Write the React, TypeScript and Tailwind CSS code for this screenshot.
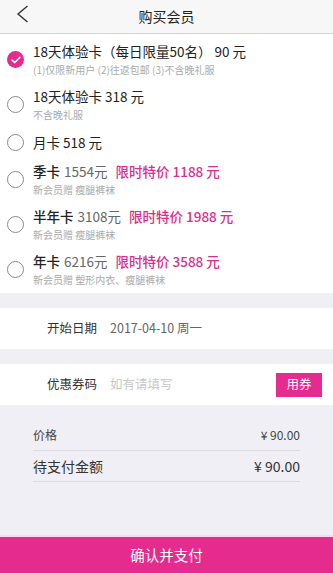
import type { ReactNode } from 'react';

const font = { fontFamily: '"Noto Sans CJK SC", "Noto Sans", sans-serif' };

interface Plan {
  title: ReactNode;
  sub?: string;
  checked?: boolean;
}

function Promo({ name, orig, price }: { name: string; orig: string; price: string }) {
  return (
    <>
      <span className="font-medium">{name}</span>
      <span className="ml-[4px] text-[#666]">{orig}</span>
      <span className="ml-[8px] font-medium text-[#d92f8b]">{price}</span>
    </>
  );
}

const plans: Plan[] = [
  {
    title: <span>18天体验卡（每日限量50名） 90 元</span>,
    sub: '(1)仅限新用户 (2)往返包邮 (3)不含晚礼服',
    checked: true,
  },
  { title: <span>18天体验卡 318 元</span>, sub: '不含晚礼服' },
  { title: <span>月卡 518 元</span> },
  { title: <Promo name="季卡" orig="1554元" price="限时特价 1188 元" />, sub: '新会员赠 瘦腿裤袜' },
  { title: <Promo name="半年卡" orig="3108元" price="限时特价 1988 元" />, sub: '新会员赠 瘦腿裤袜' },
  { title: <Promo name="年卡" orig="6216元" price="限时特价 3588 元" />, sub: '新会员赠 塑形内衣、瘦腿裤袜' },
];

function Radio({ checked }: { checked?: boolean }) {
  if (checked) {
    return (
      <span className="flex h-[17px] w-[17px] shrink-0 items-center justify-center rounded-full bg-[#e52b8e]">
        <svg width="10" height="8" viewBox="0 0 10 8" fill="none">
          <path d="M1 4l2.8 2.6L9 1.2" stroke="white" strokeWidth="1.5" strokeLinecap="round" strokeLinejoin="round" />
        </svg>
      </span>
    );
  }
  return <span className="h-[17px] w-[17px] shrink-0 rounded-full border border-[#8a8a8a]" />;
}

export default function App() {
  return (
    <div className="flex h-[573px] w-[333px] flex-col bg-white text-[#222]" style={font}>
      <header className="relative flex h-[34px] shrink-0 items-center justify-center border-b border-[#d3d0dc] bg-[#f7f7f7]">
        <svg className="absolute left-[16px] top-[5px]" width="13" height="18" viewBox="0 0 13 18" fill="none">
          <path d="M11.5 1L2 9l9.5 8" stroke="#333" strokeWidth="1.4" />
        </svg>
        <h1 className="text-[14px] text-[#222]">购买会员</h1>
      </header>

      <div className="pt-[3px]">
        {plans.map((p, i) => (
          <div key={i} className={`flex items-center pl-[7px] ${p.sub ? 'py-[4px]' : 'py-[5px]'}`}>
            <Radio checked={p.checked} />
            <div className="ml-[9px]">
              <div className="flex h-[20px] items-center whitespace-pre text-[13.5px]">{p.title}</div>
              {p.sub && <div className="mt-[1px] h-[16px] text-[10px] leading-[16px] text-[#aaa]">{p.sub}</div>}
            </div>
          </div>
        ))}
      </div>

      <div className="mt-[1px] h-[15px] shrink-0 bg-[#efeff4]" />
      <div className="flex h-[41px] shrink-0 items-center pl-[47px] text-[12.5px]">
        <span className="text-[#333]">开始日期</span>
        <span className="ml-[13px] text-[#666]">2017-04-10 周一</span>
      </div>
      <div className="h-[15px] shrink-0 bg-[#efeff4]" />
      <div className="flex h-[41px] shrink-0 items-center pl-[47px] pr-[11px] text-[12.5px]">
        <span className="text-[#333]">优惠券码</span>
        <span className="ml-[13px] flex-1 text-[#c8c8c8]">如有请填写</span>
        <button className="h-[24px] w-[46px] bg-[#e52b8e] text-[12.5px] text-white">用券</button>
      </div>

      <div className="flex-1 bg-[#f0eff5] px-[33px] pt-[14px]">
        <div className="flex h-[32px] items-center justify-between border-b border-[#dcdbe2] text-[12px] text-[#444]">
          <span>价格</span>
          <span>¥ 90.00</span>
        </div>
        <div className="flex h-[31px] items-center justify-between border-b border-[#dcdbe2] text-[14px] text-[#333]">
          <span>待支付金额</span>
          <span>¥ 90.00</span>
        </div>
      </div>

      <button className="h-[38px] shrink-0 border-t-2 border-[#f7d9e8] bg-[#e52b8e] text-[14.5px] text-white">
        确认并支付
      </button>
    </div>
  );
}
